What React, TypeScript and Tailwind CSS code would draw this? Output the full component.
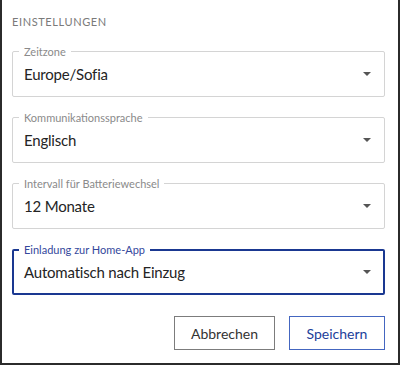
import React from "react";

type Field = {
  label: string;
  value: string;
  focused?: boolean;
};

const fields: Field[] = [
  { label: "Zeitzone", value: "Europe/Sofia" },
  { label: "Kommunikationssprache", value: "Englisch" },
  { label: "Intervall für Batteriewechsel", value: "12 Monate" },
  { label: "Einladung zur Home-App", value: "Automatisch nach Einzug", focused: true },
];

function SelectField({ label, value, focused }: Field) {
  return (
    <div
      className={
        focused
          ? "relative flex h-[46px] items-center rounded-[2px] border-2 border-[#1a3891] pl-[10px] pr-[12px]"
          : "relative flex h-[46px] items-center rounded-[2px] border border-[#d4d4d4] pl-[11px] pr-[13px]"
      }
    >
      {/* label sitting on the top border */}
      <span
        className={
          focused
            ? "absolute left-[5px] top-[-8px] bg-white px-[5px] text-[11px] leading-[14px] text-[#34489c]"
            : "absolute left-[6px] top-[-7px] bg-white px-[5px] text-[11px] leading-[14px] text-[#8a8a8a]"
        }
      >
        {label}
      </span>
      <span className="flex-1 text-[15px] tracking-[-0.2px] text-[#242424]">{value}</span>
      <span className="h-0 w-0 border-x-[4px] border-t-[4px] border-x-transparent border-t-[#555]" />
    </div>
  );
}

export default function App() {
  return (
    <div
      className="h-[365px] w-[400px] border-x-2 border-b-2 border-[#2b2b2b] bg-white pl-[10px] pr-[13px] pt-[15px]"
      style={{ fontFamily: 'Lato, "Liberation Sans", sans-serif' }}
    >
      <h2 className="text-[11px] leading-[14px] tracking-[0.6px] text-[#7a7a7a]">EINSTELLUNGEN</h2>

      <div className="mt-[22px] flex flex-col gap-[20px]">
        {fields.map((f) => (
          <SelectField key={f.label} {...f} />
        ))}
      </div>

      <div className="mt-[21px] flex justify-end gap-[14px]">
        <button className="h-[34px] w-[101px] border border-[#7c7c7c] text-[14px] text-[#333]">
          Abbrechen
        </button>
        <button className="h-[34px] w-[96px] border-[1.5px] border-[#4466c0] text-[14px] text-[#21409a]">
          Speichern
        </button>
      </div>
    </div>
  );
}
